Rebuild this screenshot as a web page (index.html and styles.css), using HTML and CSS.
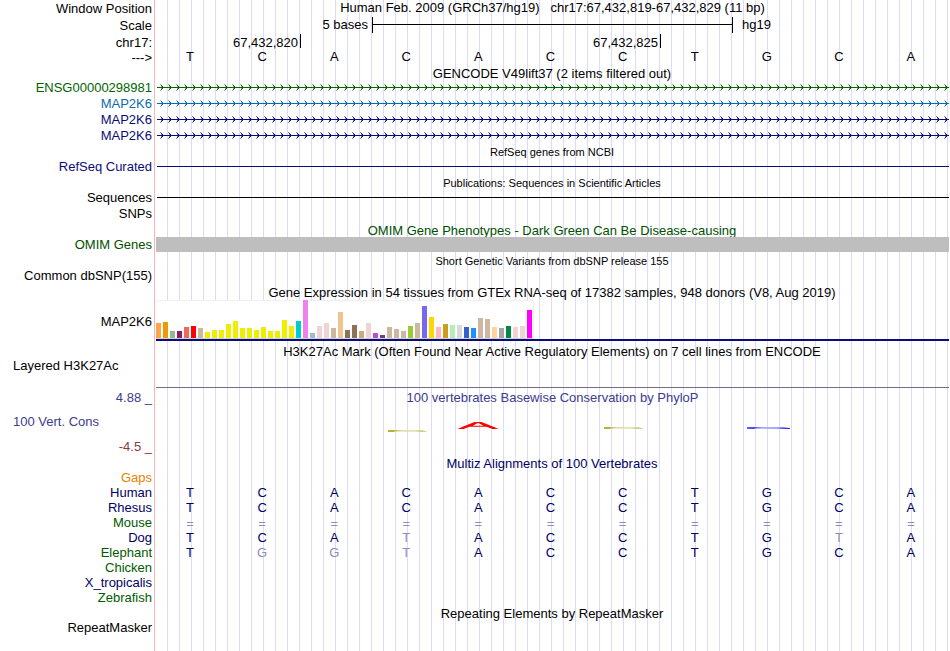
FILE: index.html
```html
<!DOCTYPE html>
<html lang="en">
<head>
<meta charset="utf-8">
<title>Genome Browser</title>
<link rel="stylesheet" href="styles.css">
</head>
<body>
<main class="browser">
  <svg class="defs" width="0" height="0" aria-hidden="true">
    <defs>
      <g id="arrow" fill="currentColor">
        <path d="M0 7h8v1H0zM5 6h1v3H5zM4 5h1v1H4zM4 9h1v1H4z"/>
        <path d="M3 4h1v1H3zM3 10h1v1H3zM4 6h1v1H4zM4 8h1v1H4z" opacity=".5"/>
      </g>
      <pattern id="arrows-green" class="green" width="8" height="16" patternUnits="userSpaceOnUse"><use href="#arrow"/></pattern>
      <pattern id="arrows-blue" class="blue" width="8" height="16" patternUnits="userSpaceOnUse"><use href="#arrow"/></pattern>
      <pattern id="arrows-navy" class="navy" width="8" height="16" patternUnits="userSpaceOnUse"><use href="#arrow"/></pattern>
    </defs>
  </svg>

  <section class="ruler">
    <div class="row position"><div class="label">Window Position</div><h1 class="caption">Human Feb. 2009 (GRCh37/hg19) &nbsp; chr17:67,432,819-67,432,829 (11 bp)</h1></div>
    <div class="row scale"><div class="label">Scale</div>
      <div class="scale-bar"><span class="size">5 bases</span><span class="span"></span><span class="assembly">hg19</span></div></div>
    <div class="row coords"><div class="label">chr17:</div>
      <div class="ticks"><span>67,432,820</span><span class="mark">67,432,825</span><span class="mark"></span></div></div>
    <div class="row direction"><div class="label">---&gt;</div>
      <div class="bases"><b>T</b><b>C</b><b>A</b><b>C</b><b>A</b><b>C</b><b>C</b><b>T</b><b>G</b><b>C</b><b>A</b></div></div>
  </section>

  <section>
    <h2 class="title">GENCODE V49lift37 (2 items filtered out)</h2>
    <div class="row green"><div class="label">ENSG00000298981</div><svg class="gene"><rect width="100%" height="16" fill="url(#arrows-green)"/></svg></div>
    <div class="row blue"><div class="label">MAP2K6</div><svg class="gene"><rect width="100%" height="16" fill="url(#arrows-blue)"/></svg></div>
    <div class="row navy"><div class="label">MAP2K6</div><svg class="gene"><rect width="100%" height="16" fill="url(#arrows-navy)"/></svg></div>
    <div class="row navy"><div class="label">MAP2K6</div><svg class="gene"><rect width="100%" height="16" fill="url(#arrows-navy)"/></svg></div>
  </section>

  <section>
    <h2 class="title small">RefSeq genes from NCBI</h2>
    <div class="row navy"><div class="label">RefSeq Curated</div><div class="line"></div></div>
  </section>

  <section>
    <h2 class="title small">Publications: Sequences in Scientific Articles</h2>
    <div class="row"><div class="label">Sequences</div><div class="line"></div></div>
    <div class="row"><div class="label">SNPs</div></div>
  </section>

  <section>
    <h2 class="title omim">OMIM Gene Phenotypes - Dark Green Can Be Disease-causing</h2>
    <div class="row omim"><div class="label">OMIM Genes</div><div class="block"></div></div>
  </section>

  <section>
    <h2 class="title small">Short Genetic Variants from dbSNP release 155</h2>
    <div class="row"><div class="label">Common dbSNP(155)</div></div>
  </section>

  <section>
    <h2 class="title">Gene Expression in 54 tissues from GTEx RNA-seq of 17382 samples, 948 donors (V8, Aug 2019)</h2>
    <div class="row gtex"><div class="label">MAP2K6</div><div class="expression"><div class="chart" id="chart"></div></div></div>
  </section>

  <section>
    <h2 class="title">H3K27Ac Mark (Often Found Near Active Regulatory Elements) on 7 cell lines from ENCODE</h2>
    <div class="row histone"><div class="label start">Layered H3K27Ac</div><div class="floor"></div></div>
  </section>

  <section>
    <div class="row phylop head"><div class="label">4.88 _</div><h2 class="caption">100 vertebrates Basewise Conservation by PhyloP</h2></div>
    <div class="row phylop wiggle">
      <div class="scores"><div class="label start">100 Vert. Cons</div><div class="label low">-4.5 _</div></div>
      <svg class="signal" viewBox="0 0 793 51" preserveAspectRatio="none" role="img" aria-label="Conservation scores">
        <defs>
          <linearGradient id="olive"><stop offset="0" stop-color="#b4b43c"/><stop offset=".15" stop-color="#b4b43c"/><stop offset=".3" stop-color="#d8d89a"/><stop offset=".7" stop-color="#dedea8"/><stop offset=".9" stop-color="#b9b94b"/><stop offset="1" stop-color="#d8d89a"/></linearGradient>
          <linearGradient id="azure"><stop offset="0" stop-color="#6464ff"/><stop offset=".15" stop-color="#4646ff"/><stop offset=".35" stop-color="#a8a8ff"/><stop offset=".7" stop-color="#a0a0ff"/><stop offset="1" stop-color="#0000ff"/></linearGradient>
        </defs>
        <path d="M232 26h7l26 .3 6 .9v.6h-6l-26-.2-1 .4h-6z" fill="url(#olive)"/>
        <path d="M448 23h7l26 .3 6 .9v.6h-6l-26-.2-1 .4h-6z" fill="url(#olive)"/>
        <path d="M591 23h8l28 .3 7 .9v.8h-8l-26-.4-2 .4h-7z" fill="url(#azure)"/>
        <path fill-rule="evenodd" d="M301.500 25 306 23 318.500 18h7L338 23l4.500 2h-6l-6-2.200h-17l-6 2.200zM317 21.800h10.500L323 19.200h-2z" fill="#f00"/>
      </svg>
    </div>
  </section>

  <section class="multiz">
    <h2 class="title deep">Multiz Alignments of 100 Vertebrates</h2>
    <div class="row gaps"><div class="label">Gaps</div></div>
    <div class="row deep"><div class="label">Human</div><div class="bases"><b>T</b><b>C</b><b>A</b><b>C</b><b>A</b><b>C</b><b>C</b><b>T</b><b>G</b><b>C</b><b>A</b></div></div>
    <div class="row deep"><div class="label">Rhesus</div><div class="bases"><b>T</b><b>C</b><b>A</b><b>C</b><b>A</b><b>C</b><b>C</b><b>T</b><b>G</b><b>C</b><b>A</b></div></div>
    <div class="row forest"><div class="label">Mouse</div><div class="bases unaligned"><i>=</i><i>=</i><i>=</i><i>=</i><i>=</i><i>=</i><i>=</i><i>=</i><i>=</i><i>=</i><i>=</i></div></div>
    <div class="row deep"><div class="label">Dog</div><div class="bases"><b>T</b><b>C</b><b>A</b><i>T</i><b>A</b><b>C</b><b>C</b><b>T</b><b>G</b><i>T</i><b>A</b></div></div>
    <div class="row forest"><div class="label">Elephant</div><div class="bases"><b>T</b><i>G</i><i>G</i><i>T</i><b>A</b><b>C</b><b>C</b><b>T</b><b>G</b><b>C</b><b>A</b></div></div>
    <div class="row forest"><div class="label">Chicken</div></div>
    <div class="row deep"><div class="label">X_tropicalis</div></div>
    <div class="row forest"><div class="label">Zebrafish</div></div>
  </section>

  <section>
    <h2 class="title">Repeating Elements by RepeatMasker</h2>
    <div class="row"><div class="label">RepeatMasker</div></div>
  </section>
</main>
<script src="chart.js"></script>
</body>
</html>
```
FILE: styles.css
```css
* { box-sizing: border-box; }

body {
  margin: 0;
  background: #fff;
  color: #000;
  font: 13px/16px "Liberation Sans", Arial, sans-serif;
}

.browser {
  min-height: 100vh;
  margin-right: 1px;
  overflow: hidden;
  background:
    linear-gradient(#ffb4b4, #ffb4b4) 154px 0 / 1px 100% no-repeat,
    repeating-linear-gradient(90deg, transparent 0 11px, #dcdcf8 11px 12px) 156px 0 no-repeat;
}

.defs { display: block; }

.row {
  display: grid;
  grid-template-columns: 152px minmax(0, 1fr);
  column-gap: 4px;
  height: 16px;
}

.label { text-align: right; white-space: pre; }
.label.start { text-align: left; padding-left: 13px; }

h1, h2 { margin: 0; font-size: 13px; font-weight: 400; text-align: center; }
.title { height: 15px; margin-left: 155px; line-height: 18px; }
.title.small { font-size: 11px; line-height: 16px; }

.ruler .row { height: 17px; }
.ruler .label { line-height: 18px; }
.ruler .coords { height: 15px; }
.ruler .direction { height: 16px; }

.scale-bar { display: grid; grid-template-columns: 3fr 5fr 3fr; height: 15px; margin-right: 1px; }
.size { text-align: right; padding-right: 4px; }
.span {
  border-left: 1px solid #000;
  background: linear-gradient(#000, #000) 0 7px / 100% 1px no-repeat;
}
.assembly { border-left: 1px solid #000; padding-left: 9px; }

.ticks { display: grid; grid-template-columns: 2fr 5fr 4fr; margin-right: 1px; line-height: 18px; text-align: right; }
.ticks span { padding-right: 2px; }
.mark { border-left: 1px solid #000; height: 14px; }

.bases {
  display: grid;
  grid-template-columns: repeat(11, 1fr);
  margin: 0 2px 0 -2px;
  text-align: center;
}
.bases b { font-weight: 400; }
.bases i { font-style: normal; color: #8c8cb8; }
.bases.unaligned { line-height: 18px; }

.gene { display: block; width: 100%; height: 16px; padding-left: 1px; }
.line { height: 1px; margin: 7px 0 0 1px; background: currentColor; }
.block { height: 15px; background: #bebebe; }

.green { color: #006400; }
.blue { color: #0c6cac; }
.navy { color: #0c0c78; }
.omim { color: #005000; }
.deep, .multiz .bases b { color: #000064; }
.forest { color: #005a00; }
.gaps { color: #e68200; }

.row.gtex { height: 44px; padding-top: 1px; }
.gtex .label { line-height: 44px; }
.expression { height: 41px; border-bottom: 2px solid #0c0c78; }
.chart {
  display: flex;
  align-items: flex-end;
  gap: 2px;
  width: 378px;
  height: 39px;
  background: #fff;
  border: solid #f0f0f0;
  border-width: 1px 1px 0 0;
  border-bottom: 1px solid #d2d2d2;
}
.bar { flex: 0 0 5px; }

.row.histone { height: 31px; }
.floor { height: 30px; border-bottom: 1px solid #786c82; }

.phylop { color: #3c3c8c; }
.phylop.head { height: 15px; line-height: 18px; }
.phylop.wiggle { height: 51px; }
.scores { display: flex; flex-direction: column; justify-content: space-between; padding-top: 10px; }
.low { color: #8c3c3c; }
.signal { display: block; width: 100%; height: 51px; }

.multiz .row { height: 15px; }
```
FILE: chart.js
```js
const tissues = [
  [15, "#ffa54f"], [16, "#ee9a00"], [7, "#8fbc8f"], [7, "#8b1c62"], [11, "#ee6a50"], [12, "#ff0000"],
  [10, "#cdb79e"], [6, "#eeee00"], [8, "#eeee00"], [8, "#eeee00"], [14, "#eeee00"], [17, "#eeee00"],
  [10, "#eeee00"], [10, "#eeee00"], [8, "#eeee00"], [11, "#eeee00"], [7, "#eeee00"], [7, "#eeee00"],
  [18, "#eeee00"], [12, "#eeee00"], [17, "#00cdcd"], [38, "#ee82ee"], [5, "#9ac0cd"], [12, "#eed5d2"],
  [15, "#eed5d2"], [10, "#cdb79e"], [26, "#eec591"], [8, "#8b7355"], [13, "#8b7355"], [7, "#cdaa7d"],
  [15, "#eed5d2"], [5, "#b452cd"], [3, "#7a378b"], [11, "#cdb79e"], [9, "#cdb79e"], [7, "#cdb79e"],
  [12, "#9acd32"], [15, "#cdb79e"], [32, "#7a67ee"], [21, "#ffd700"], [11, "#ffb6c1"], [14, "#cd9b1d"],
  [13, "#b4eeb4"], [13, "#d9d9d9"], [11, "#3a5fcd"], [10, "#1e90ff"], [20, "#cdb79e"], [19, "#cdb79e"],
  [11, "#ffd39b"], [10, "#a6a6a6"], [12, "#008b45"], [11, "#eed5d2"], [12, "#eed5d2"], [28, "#ff00ff"]
];

const chart = document.getElementById("chart");
for (const [height, color] of tissues) {
  const bar = document.createElement("div");
  bar.className = "bar";
  bar.style.height = height + "px";
  bar.style.background = color;
  chart.append(bar);
}
```
